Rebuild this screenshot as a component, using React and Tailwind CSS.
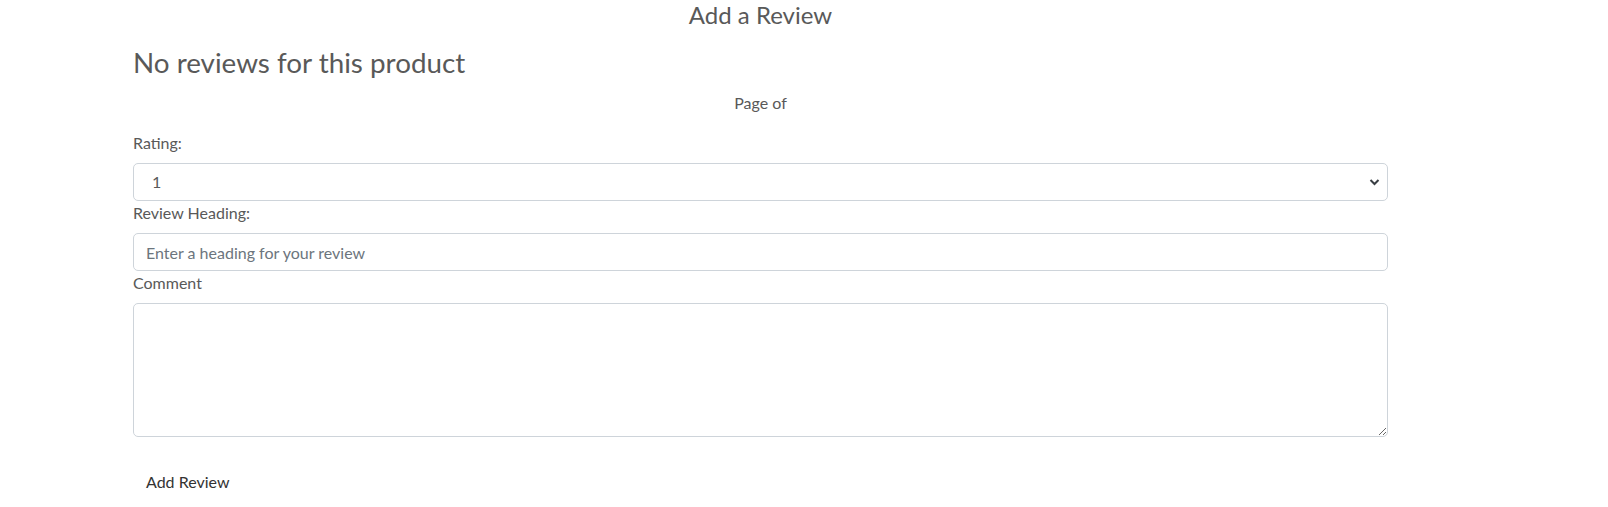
import { useState } from "react";

export default function App() {
  const [rating, setRating] = useState("1");
  const [heading, setHeading] = useState("");
  const [comment, setComment] = useState("");

  return (
    <div className="min-h-[507px] bg-white pt-[1px] font-['Lato','Liberation_Sans',sans-serif] text-[16px] text-[#595959]">
      <div className="ml-[133px] w-[1255px]">
        {/* Title */}
        <h4 className="text-center text-[24px] leading-[1.2] font-normal">Add a Review</h4>

        {/* Reviews list (empty) */}
        <h3 className="mt-[16px] text-[27.8px] leading-[1.2] font-normal">No reviews for this product</h3>
        <p className="mt-[12px] text-center leading-[24px]">Page of</p>

        {/* Form */}
        <form className="mt-[16px]" onSubmit={(e) => e.preventDefault()}>
          <label htmlFor="rating" className="block leading-[24px] mb-[8px]">Rating:</label>
          <div className="relative">
            <select
              id="rating"
              value={rating}
              onChange={(e) => setRating(e.target.value)}
              className="block w-full h-[38px] appearance-none rounded-[5px] border border-[#ced4da] bg-white pl-[18px] pr-[40px] text-[16px] text-[#595959] outline-none"
            >
              {[1, 2, 3, 4, 5].map((n) => (
                <option key={n} value={n}>{n}</option>
              ))}
            </select>
            <svg
              className="pointer-events-none absolute right-[8px] top-[15px]"
              width="11"
              height="8"
              viewBox="0 0 11 8"
              fill="none"
            >
              <path d="M1.5 2L5.5 6L9.5 2" stroke="#3a3f44" strokeWidth="2" />
            </svg>
          </div>

          <label htmlFor="heading" className="block leading-[24px] mb-[8px]">Review Heading:</label>
          <input
            id="heading"
            type="text"
            value={heading}
            onChange={(e) => setHeading(e.target.value)}
            placeholder="Enter a heading for your review"
            className="block w-full h-[38px] rounded-[5px] border border-[#ced4da] px-[12px] text-[16px] text-[#595959] placeholder:text-[#6c757d] outline-none"
          />

          <label htmlFor="comment" className="block leading-[24px] mb-[8px]">Comment</label>
          <textarea
            id="comment"
            value={comment}
            onChange={(e) => setComment(e.target.value)}
            className="block w-full h-[134px] rounded-[5px] border border-[#ced4da] px-[12px] py-[6px] text-[16px] text-[#595959] outline-none"
          />

          <button
            type="submit"
            className="mt-[26px] border border-transparent bg-transparent px-[12px] py-[6px] leading-[24px] text-[16px] text-[#333]"
          >
            Add Review
          </button>
        </form>
      </div>
    </div>
  );
}
